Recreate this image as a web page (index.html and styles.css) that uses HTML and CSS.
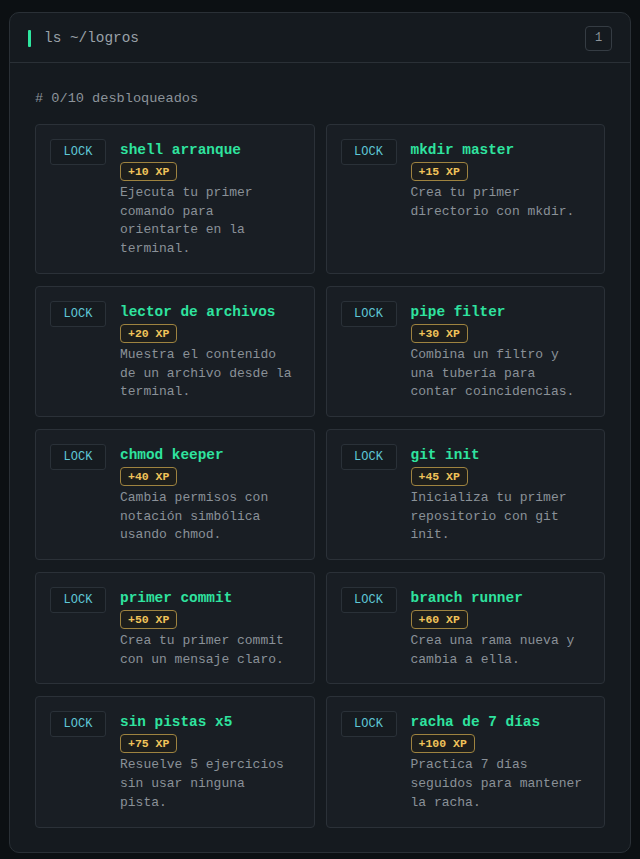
FILE: index.html
```html
<!DOCTYPE html>
<html lang="es">
<head>
<meta charset="utf-8">
<title>logros</title>
<link rel="stylesheet" href="styles.css">
</head>
<body>
<section class="panel">
  <header class="panel-head">
    <span class="prompt-bar"></span>
    <h1 class="panel-title">ls ~/logros</h1>
    <span class="count">1</span>
  </header>
  <div class="panel-body">
    <p class="summary"># 0/10 desbloqueados</p>
    <div class="grid">
      <article class="card">
        <span class="lock">LOCK</span>
        <div class="info">
          <h2 class="name">shell arranque</h2>
          <span class="xp">+10 XP</span>
          <p class="desc">Ejecuta tu primer comando para orientarte en la terminal.</p>
        </div>
      </article>
      <article class="card">
        <span class="lock">LOCK</span>
        <div class="info">
          <h2 class="name">mkdir master</h2>
          <span class="xp">+15 XP</span>
          <p class="desc">Crea tu primer directorio con mkdir.</p>
        </div>
      </article>
      <article class="card">
        <span class="lock">LOCK</span>
        <div class="info">
          <h2 class="name">lector de archivos</h2>
          <span class="xp">+20 XP</span>
          <p class="desc">Muestra el contenido de un archivo desde la terminal.</p>
        </div>
      </article>
      <article class="card">
        <span class="lock">LOCK</span>
        <div class="info">
          <h2 class="name">pipe filter</h2>
          <span class="xp">+30 XP</span>
          <p class="desc">Combina un filtro y una tubería para contar coincidencias.</p>
        </div>
      </article>
      <article class="card">
        <span class="lock">LOCK</span>
        <div class="info">
          <h2 class="name">chmod keeper</h2>
          <span class="xp">+40 XP</span>
          <p class="desc">Cambia permisos con notación simbólica usando chmod.</p>
        </div>
      </article>
      <article class="card">
        <span class="lock">LOCK</span>
        <div class="info">
          <h2 class="name">git init</h2>
          <span class="xp">+45 XP</span>
          <p class="desc">Inicializa tu primer repositorio con git init.</p>
        </div>
      </article>
      <article class="card">
        <span class="lock">LOCK</span>
        <div class="info">
          <h2 class="name">primer commit</h2>
          <span class="xp">+50 XP</span>
          <p class="desc">Crea tu primer commit con un mensaje claro.</p>
        </div>
      </article>
      <article class="card">
        <span class="lock">LOCK</span>
        <div class="info">
          <h2 class="name">branch runner</h2>
          <span class="xp">+60 XP</span>
          <p class="desc">Crea una rama nueva y cambia a ella.</p>
        </div>
      </article>
      <article class="card">
        <span class="lock">LOCK</span>
        <div class="info">
          <h2 class="name">sin pistas x5</h2>
          <span class="xp">+75 XP</span>
          <p class="desc">Resuelve 5 ejercicios sin usar ninguna pista.</p>
        </div>
      </article>
      <article class="card">
        <span class="lock">LOCK</span>
        <div class="info">
          <h2 class="name">racha de 7 días</h2>
          <span class="xp">+100 XP</span>
          <p class="desc">Practica 7 días seguidos para mantener la racha.</p>
        </div>
      </article>
    </div>
  </div>
</section>
</body>
</html>
```

FILE: styles.css
```css
* {
  box-sizing: border-box;
}

html,
body {
  margin: 0;
  background: #0c1013;
}

body {
  padding: 12px 9px 8px;
  font-family: "Liberation Mono", "DejaVu Sans Mono", monospace;
  color: #8c939a;
}

.panel {
  width: 622px;
  background: #151a1f;
  border: 1px solid #2a3036;
  border-radius: 10px;
  overflow: hidden;
}

.panel-head {
  display: flex;
  align-items: center;
  height: 50px;
  padding: 1px 18px 0;
  border-bottom: 1px solid #2a3036;
}

.prompt-bar {
  width: 3px;
  height: 17px;
  background: #2ee69f;
  border-radius: 1px;
}

.panel-title {
  margin: 0 0 0 13px;
  flex: 1;
  font-size: 14.4px;
  font-weight: 400;
  color: #9aa1a8;
}

.count {
  display: flex;
  align-items: center;
  justify-content: center;
  width: 27px;
  height: 25px;
  border: 1px solid #353c43;
  border-radius: 4px;
  font-size: 12px;
  color: #8c939a;
}

.panel-body {
  padding: 26px 25px 24px;
}

.summary {
  margin: 0 0 15px;
  font-size: 13.6px;
  line-height: 20px;
  color: #8c939a;
}

.grid {
  display: grid;
  grid-template-columns: 1fr 1fr;
  gap: 12px 11px;
}

.card {
  display: flex;
  align-items: flex-start;
  gap: 14px;
  padding: 14px 15px 14px 14px;
  background: #191e24;
  border: 1px solid #2b3138;
  border-radius: 4px;
}

.lock {
  flex: none;
  display: flex;
  align-items: center;
  justify-content: center;
  width: 56px;
  height: 26px;
  border: 1px solid #2a3138;
  border-radius: 3px;
  background: #161b20;
  font-size: 12px;
  color: #5fc7d6;
}

.info {
  flex: 1;
  min-width: 0;
  display: flex;
  flex-direction: column;
  align-items: flex-start;
}

.name {
  margin: 0;
  padding-top: 1px;
  font-size: 14.4px;
  line-height: 20px;
  font-weight: 700;
  color: #2fe39f;
}

.xp {
  margin-top: 2px;
  display: inline-flex;
  align-items: center;
  height: 19px;
  padding: 0 7px;
  border: 1px solid #9e8340;
  border-radius: 4px;
  background: #1d1e1c;
  font-size: 11.5px;
  font-weight: 700;
  color: #f0c35a;
}

.desc {
  margin: 3px 0 0;
  font-size: 13px;
  line-height: 18.7px;
  color: #8a9198;
}
```
